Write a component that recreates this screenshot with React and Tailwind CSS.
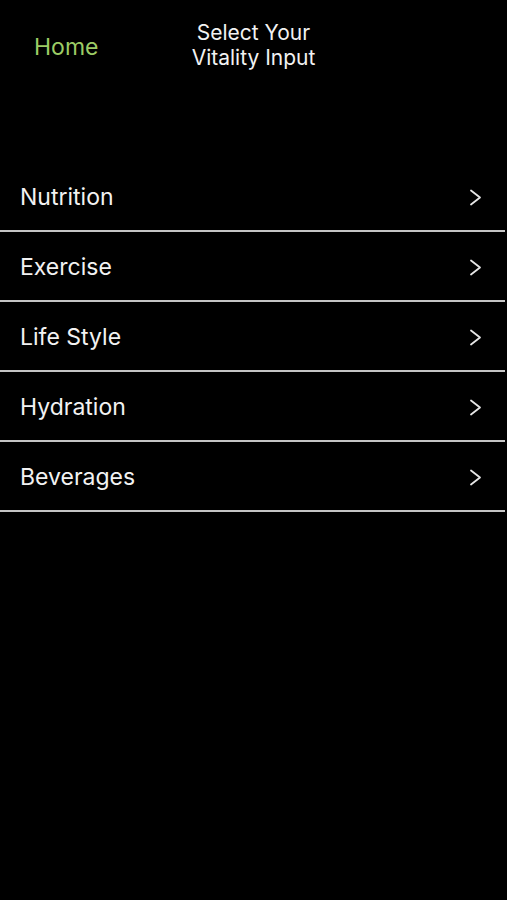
import React from 'react';

const items = ['Nutrition', 'Exercise', 'Life Style', 'Hydration', 'Beverages'];

const Chevron = () => (
  <svg width="13" height="17" viewBox="0 0 13 17" fill="none">
    <path d="M2 1.5 L11 8.5 L2 15.5" stroke="#e6e6e6" strokeWidth="1.8" strokeLinecap="round" strokeLinejoin="round" />
  </svg>
);

const App = () => {
  return (
    <div className="min-h-[900px] w-full bg-black text-white font-['Inter',sans-serif]">
      {/* Nav bar */}
      <div className="relative h-[90px]">
        <button className="absolute left-[34px] top-[32px] text-[23px] leading-[30px] text-[#9ccc65]">
          Home
        </button>
        <div className="pt-[20px] text-center text-[21px] leading-[25px] text-[#f2f2f2]">
          <div>Select Your</div>
          <div>Vitality Input</div>
        </div>
      </div>

      {/* List */}
      <div className="mt-[72px] w-[505px]">
        {items.map((item) => (
          <div
            key={item}
            className="flex h-[70px] items-center justify-between border-b-2 border-[#c4c4c4] pl-[20px] pr-[23px] pt-[2px]"
          >
            <span className="text-[23px] leading-[30px] text-[#f2f2f2]">{item}</span>
            <Chevron />
          </div>
        ))}
      </div>
    </div>
  );
};

export default App;
